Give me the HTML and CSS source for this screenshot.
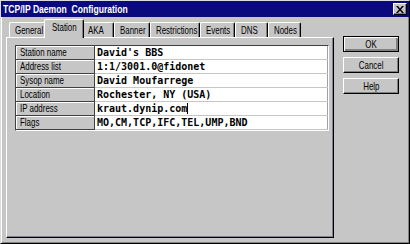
FILE: index.html
```html
<!DOCTYPE html>
<html lang="en">
<head>
    <meta charset="UTF-8">
    <meta name="viewport" content="width=device-width, initial-scale=1.0">
    <title>TCP/IP Daemon Configuration</title>
    <link rel="stylesheet" href="styles.css">
</head>
<body>

<div class="window">
    <div class="titlebar">
        <span class="title-text">TCP/IP Daemon&nbsp; Configuration</span>
        <button class="close-btn" aria-label="Close">
            <svg width="8" height="7" viewBox="0 0 8 7">
                <path d="M0 0h2l2 2.5L6 0h2L5 3.5 8 7H6L4 4.5 2 7H0l3-3.5z" fill="#000"/>
            </svg>
        </button>
    </div>

    <div class="main">
        <div class="sheet">
            <div class="tabs">
                <div class="tab"><span class="sq">General</span></div>
                <div class="tab active"><span class="sq">Station</span></div>
                <div class="tab"><span class="sq">AKA</span></div>
                <div class="tab"><span class="sq">Banner</span></div>
                <div class="tab"><span class="sq">Restrictions</span></div>
                <div class="tab"><span class="sq">Events</span></div>
                <div class="tab"><span class="sq">DNS</span></div>
                <div class="tab"><span class="sq">Nodes</span></div>
            </div>

            <div class="panel">
                <div class="grid">
                    <div class="row">
                        <div class="label"><span class="sq">Station name</span></div>
                        <div class="value">David's BBS</div>
                    </div>
                    <div class="row">
                        <div class="label"><span class="sq">Address list</span></div>
                        <div class="value">1:1/3001.0@fidonet</div>
                    </div>
                    <div class="row">
                        <div class="label"><span class="sq">Sysop name</span></div>
                        <div class="value">David Moufarrege</div>
                    </div>
                    <div class="row">
                        <div class="label"><span class="sq">Location</span></div>
                        <div class="value">Rochester, NY (USA)</div>
                    </div>
                    <div class="row">
                        <div class="label"><span class="sq">IP address</span></div>
                        <div class="value">kraut.dynip.com<span class="caret"></span></div>
                    </div>
                    <div class="row last">
                        <div class="label"><span class="sq">Flags</span></div>
                        <div class="value">MO,CM,TCP,IFC,TEL,UMP,BND</div>
                    </div>
                </div>
            </div>
        </div>

        <div class="buttons">
            <button class="btn default"><span class="sq">OK</span></button>
            <button class="btn"><span class="sq">Cancel</span></button>
            <button class="btn"><span class="sq">Help</span></button>
        </div>
    </div>
</div>

</body>
</html>
```

FILE: styles.css
```css
body {
    margin: 0;
    background-color: #c6c6c6;
    font-family: "Liberation Sans", Arial, sans-serif;
    font-size: 11px;
    color: #000;
}

/* squeezed text, the screenshot glyphs are narrow */
.sq {
    display: inline-block;
    transform: scaleX(0.72);
    transform-origin: left center;
    white-space: nowrap;
}

.window {
    width: 410px;
    height: 244px;
    box-sizing: border-box;
    border: 1px solid;
    border-color: #dcdcdc #000 #000 #dcdcdc;
    box-shadow: inset 1px 1px #fff, inset -1px -1px #808080;
    background-color: #c6c6c6;
}

.titlebar {
    height: 16px;
    background-color: #0a0a7e;
    color: #fff;
    display: flex;
    align-items: center;
    justify-content: space-between;
    padding: 0 2px 0 2px;
}

.title-text {
    font-weight: bold;
    font-size: 11px;
    display: inline-block;
    transform: scaleX(0.78);
    transform-origin: left center;
    white-space: nowrap;
}

.close-btn {
    width: 14px;
    height: 12px;
    padding: 0;
    background-color: #c6c6c6;
    border: 1px solid;
    border-color: #fff #000 #000 #fff;
    box-shadow: inset -1px -1px #808080;
    display: flex;
    align-items: center;
    justify-content: center;
}

.main {
    display: flex;
    padding: 2px 0 0 5px;
}

.sheet {
    width: 328px;
}

.tabs {
    display: flex;
    align-items: flex-end;
    height: 18px;
    padding-left: 3px;
    position: relative;
    z-index: 1;
}

.tab {
    height: 14px;
    padding: 0 5px;
    border: 1px solid;
    border-bottom: none;
    border-color: #fff #000 #000 #fff;
    border-radius: 2px 2px 0 0;
    box-shadow: inset -1px 0 #808080;
    line-height: 14px;
    background-color: #c6c6c6;
}

.tab .sq {
    transform-origin: left center;
}

.tab:nth-child(1) { width: 25px; }
.tab:nth-child(2) { width: 24px; }
.tab:nth-child(3) { width: 20px; }
.tab:nth-child(4) { width: 24px; }
.tab:nth-child(5) { width: 38px; }
.tab:nth-child(6) { width: 23px; }
.tab:nth-child(7) { width: 21px; }
.tab:nth-child(8) { width: 21px; }

.tab.active {
    height: 18px;
    margin: 0 -2px 0 -2px;
    padding: 0 7px;
    line-height: 14px;
    position: relative;
    top: 1px;
    z-index: 2;
}

.panel {
    height: 201px;
    box-sizing: border-box;
    border: 1px solid;
    border-color: #fff #000 #000 #fff;
    box-shadow: inset -1px -1px #80809a;
    padding: 7px 0 0 8px;
}

.grid {
    width: 312px;
    border: 1px solid;
    border-color: #404040 #fff #fff #404040;
    box-shadow: inset -1px -1px #a0a0a0;
    background-color: #fff;
}

.row {
    display: flex;
    height: 14px;
}

.label {
    width: 79px;
    box-sizing: border-box;
    background-color: #c6c6c6;
    border-right: 1px solid #404040;
    border-bottom: 1px solid #404040;
    box-shadow: inset 1px 1px #fff;
    padding-left: 4px;
    line-height: 13px;
    font-size: 11px;
    overflow: hidden;
}

.value {
    flex: 1;
    border-bottom: 1px solid #c6c6c6;
    padding-left: 2px;
    font-family: "DejaVu Sans Mono", "Liberation Mono", monospace;
    font-weight: bold;
    font-size: 10px;
    line-height: 13px;
    white-space: nowrap;
}

.caret {
    display: inline-block;
    width: 1px;
    height: 11px;
    background-color: #000;
    vertical-align: -2px;
}

.buttons {
    display: flex;
    flex-direction: column;
    gap: 5px;
    margin: 17px 0 0 9px;
}

.btn {
    width: 56px;
    height: 16px;
    padding: 0;
    font-family: "Liberation Sans", Arial, sans-serif;
    font-size: 11px;
    background-color: #c6c6c6;
    border: 1px solid;
    border-color: #fff #000 #000 #fff;
    box-shadow: inset -1px -1px #808080;
    text-align: center;
}

.btn .sq {
    transform-origin: center;
}

.btn.default {
    border: 1px solid #000;
    box-shadow: inset 1px 1px #fff, inset -2px -2px #808080;
}
```
